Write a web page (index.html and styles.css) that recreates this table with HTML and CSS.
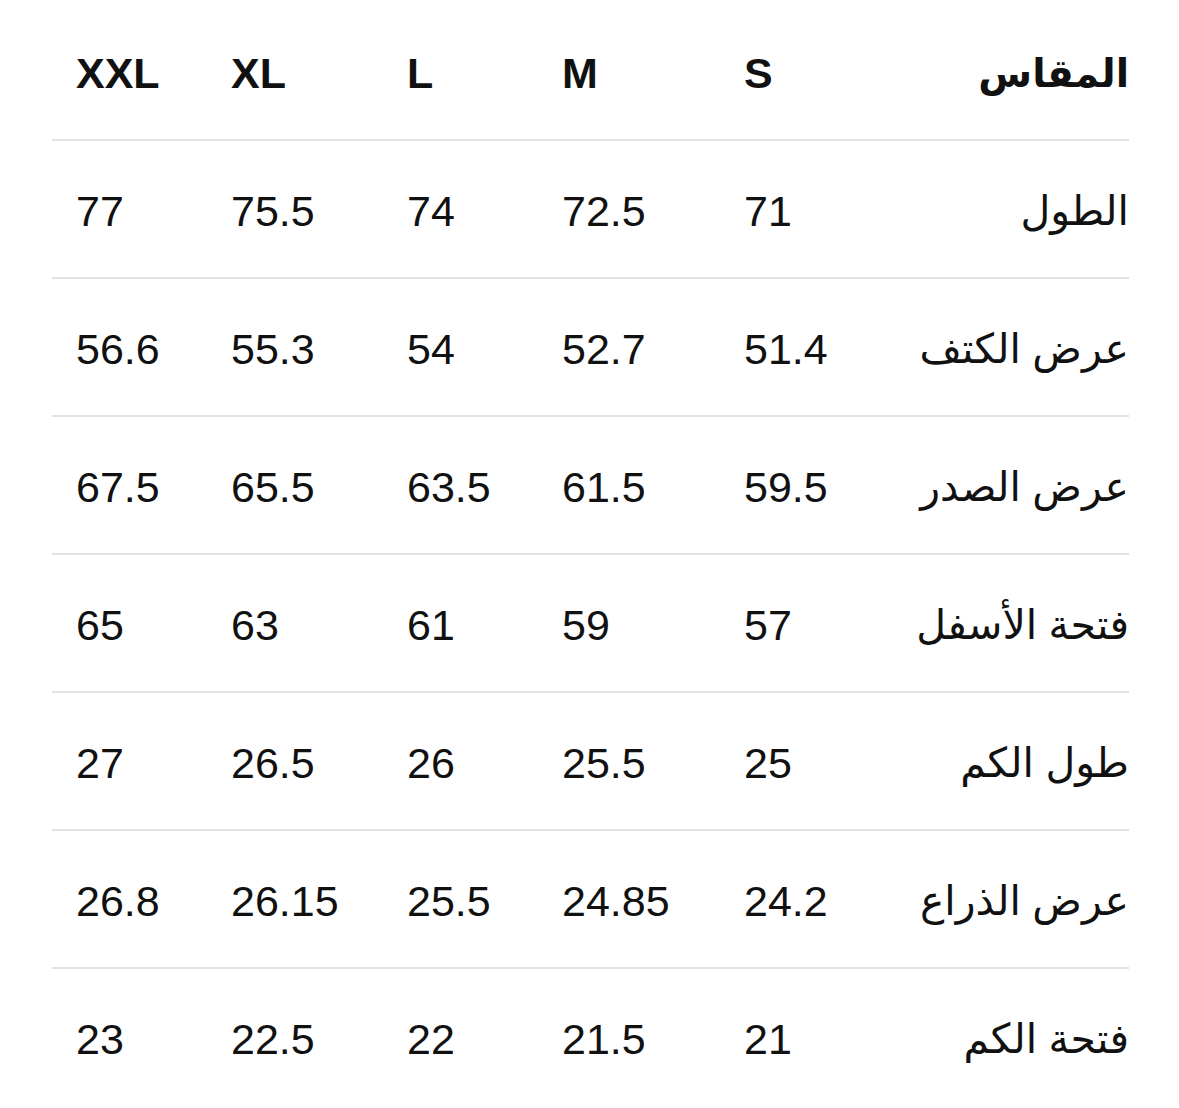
FILE: index.html
```html
<!DOCTYPE html>
<html lang="ar" dir="rtl">
<head>
<meta charset="utf-8">
<title>جدول المقاسات</title>
<link rel="stylesheet" href="styles.css">
</head>
<body>
<div class="size-table">
  <div class="row head">
    <div class="cell label">المقاس</div>
    <div class="cell num">S</div>
    <div class="cell num">M</div>
    <div class="cell num">L</div>
    <div class="cell num">XL</div>
    <div class="cell num">XXL</div>
  </div>
  <div class="row">
    <div class="cell label">الطول</div>
    <div class="cell num">71</div>
    <div class="cell num">72.5</div>
    <div class="cell num">74</div>
    <div class="cell num">75.5</div>
    <div class="cell num">77</div>
  </div>
  <div class="row">
    <div class="cell label">عرض الكتف</div>
    <div class="cell num">51.4</div>
    <div class="cell num">52.7</div>
    <div class="cell num">54</div>
    <div class="cell num">55.3</div>
    <div class="cell num">56.6</div>
  </div>
  <div class="row">
    <div class="cell label">عرض الصدر</div>
    <div class="cell num">59.5</div>
    <div class="cell num">61.5</div>
    <div class="cell num">63.5</div>
    <div class="cell num">65.5</div>
    <div class="cell num">67.5</div>
  </div>
  <div class="row">
    <div class="cell label">فتحة الأسفل</div>
    <div class="cell num">57</div>
    <div class="cell num">59</div>
    <div class="cell num">61</div>
    <div class="cell num">63</div>
    <div class="cell num">65</div>
  </div>
  <div class="row">
    <div class="cell label">طول الكم</div>
    <div class="cell num">25</div>
    <div class="cell num">25.5</div>
    <div class="cell num">26</div>
    <div class="cell num">26.5</div>
    <div class="cell num">27</div>
  </div>
  <div class="row">
    <div class="cell label">عرض الذراع</div>
    <div class="cell num">24.2</div>
    <div class="cell num">24.85</div>
    <div class="cell num">25.5</div>
    <div class="cell num">26.15</div>
    <div class="cell num">26.8</div>
  </div>
  <div class="row last">
    <div class="cell label">فتحة الكم</div>
    <div class="cell num">21</div>
    <div class="cell num">21.5</div>
    <div class="cell num">22</div>
    <div class="cell num">22.5</div>
    <div class="cell num">23</div>
  </div>
</div>
</body>
</html>
```
FILE: styles.css
```css
html, body {
  margin: 0;
  padding: 0;
  background: #ffffff;
}
body {
  font-family: "Liberation Sans", "DejaVu Sans", sans-serif;
  color: #111111;
}
.size-table {
  width: 1077px;
  margin: 3px 50px 0 52px;
}
.row {
  display: grid;
  grid-template-columns: 249px 160px 182px 155px 176px 155px;
  height: 136px;
  border-bottom: 2px solid #e2e2e2;
  align-items: center;
}
.row.last {
  border-bottom: none;
}
.cell {
  font-size: 43px;
  line-height: 1;
  white-space: nowrap;
  padding-top: 4px;
}
.cell.label {
  text-align: right;
  font-size: 41px;
}
.cell.num {
  direction: ltr;
  text-align: left;
  padding-left: 24px;
}
.head .cell {
  font-weight: bold;
}
.head .cell.label {
  font-size: 39px;
}
```
